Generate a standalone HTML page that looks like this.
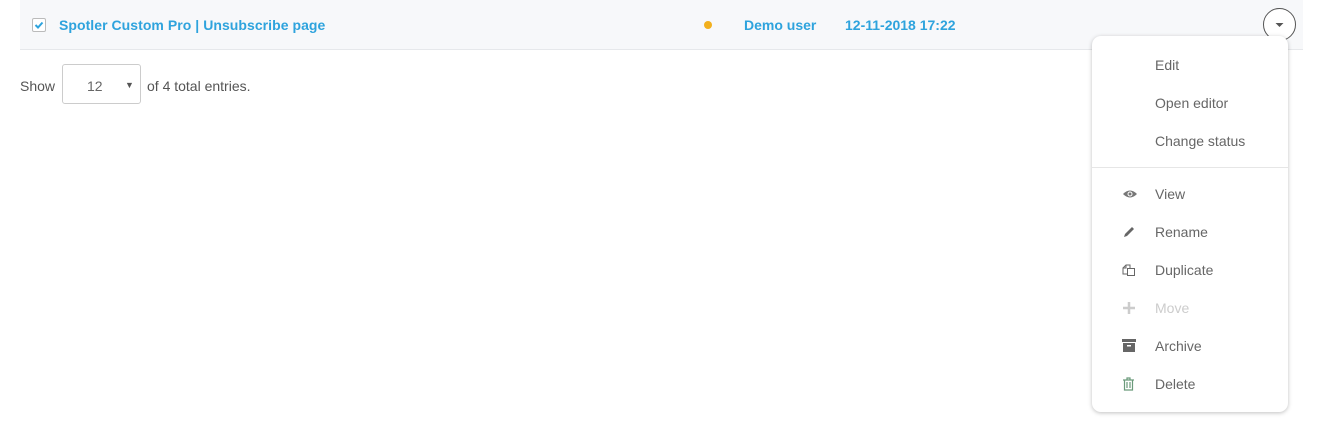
<!DOCTYPE html>
<html><head><style>
body{margin:0;width:1322px;height:447px;background:#fff;font-family:"Liberation Sans",sans-serif;font-size:14px;position:relative;overflow:hidden}
.row{position:absolute;left:20px;top:0;width:1283px;height:49px;background:#f7f8fa;border-bottom:1px solid #e6e8eb}
.a{position:absolute;color:#2ea3dd;font-weight:bold;top:17px;font-size:14px}
.cb{position:absolute;left:32px;top:18px;width:12px;height:12px;border:1px solid #bbb;border-radius:2px;background:#fff}
.dot{position:absolute;left:704px;top:21px;width:8px;height:8px;border-radius:50%;background:#f2b01e}
.btn{position:absolute;left:1263px;top:8px;width:31px;height:31px;border:1px solid #555;border-radius:50%;background:#fff}
.menu{position:absolute;left:1092px;top:36px;width:196px;height:376px;background:#fff;border-radius:9px;box-shadow:0 1px 4px rgba(0,0,0,.25)}
.it{position:absolute;left:63px;color:#666;font-size:14px;margin-top:1px}
.ic{position:absolute;left:30px}
.show{position:absolute;top:78px;color:#555}
.sel{position:absolute;left:62px;top:64px;width:77px;height:38px;border:1px solid #ccc;border-radius:3px}
</style></head><body>
<div class="row"></div>
<div class="cb"><svg width="12" height="12" style="position:absolute;left:0;top:0"><path d="M2.5 6 L5 8.5 L9.5 3.5" stroke="#2ea3dd" stroke-width="2" fill="none"/></svg></div>
<div class="a" style="left:59px;letter-spacing:0.05px">Spotler Custom Pro | Unsubscribe page</div>
<div class="dot"></div>
<div class="a" style="left:744px">Demo user</div>
<div class="a" style="left:845px">12-11-2018 17:22</div>
<div class="btn"><svg width="31" height="31"><path d="M11.5 14 L19.5 14 L15.5 18Z" fill="#555"/></svg></div>
<div class="show" style="left:20px">Show</div>
<div class="sel"><span style="position:absolute;left:24px;top:13px;color:#666">12</span><span style="position:absolute;left:62px;top:15px;font-size:9px;color:#555">▼</span></div>
<div class="show" style="left:147px">of 4 total entries.</div>
<div class="menu">
<div class="it" style="top:20px">Edit</div>
<div class="it" style="top:58px">Open editor</div>
<div class="it" style="top:96px">Change status</div>
<div style="position:absolute;left:0;right:0;top:131px;border-top:1px solid #e6e6e6"></div>
<svg class="ic" style="top:153px" width="16" height="10"><path d="M1 5 Q8 -2 15 5 Q8 12 1 5Z" fill="#777"/><circle cx="8" cy="5" r="2.5" fill="#fff"/><circle cx="8" cy="5" r="1.5" fill="#777"/></svg>
<div class="it" style="top:149px">View</div>
<svg class="ic" style="top:189px" width="14" height="14"><path d="M2 12 L3 9 L10 2 L12 4 L5 11Z" fill="#666"/></svg>
<div class="it" style="top:187px">Rename</div>
<svg class="ic" style="top:227px" width="14" height="14"><path d="M1 5 L4 2 H8 V5 M4 2 V5 H1 V11 H5" stroke="#666" fill="none"/><rect x="5.5" y="5.5" width="7" height="7" stroke="#666" fill="none"/></svg>
<div class="it" style="top:225px">Duplicate</div>
<svg class="ic" style="top:265px" width="14" height="14"><path d="M7 1 V13 M1 7 H13" stroke="#ccc" stroke-width="2.5"/></svg>
<div class="it" style="top:263px;color:#ccc">Move</div>
<svg class="ic" style="top:303px" width="14" height="13"><rect x="0" y="0" width="14" height="3" fill="#666"/><rect x="1" y="4" width="12" height="9" fill="#666"/><rect x="5" y="6" width="4" height="1.5" fill="#fff"/></svg>
<div class="it" style="top:301px">Archive</div>
<svg class="ic" style="top:341px" width="13" height="14"><path d="M1 3 H12 M5 3 V1 H8 V3 M2.5 3.5 V13 H10.5 V3.5 M5 5 V11 M8 5 V11" stroke="#6a9a7a" fill="none" stroke-width="1.2"/></svg>
<div class="it" style="top:339px">Delete</div>
</div>
</body></html>
